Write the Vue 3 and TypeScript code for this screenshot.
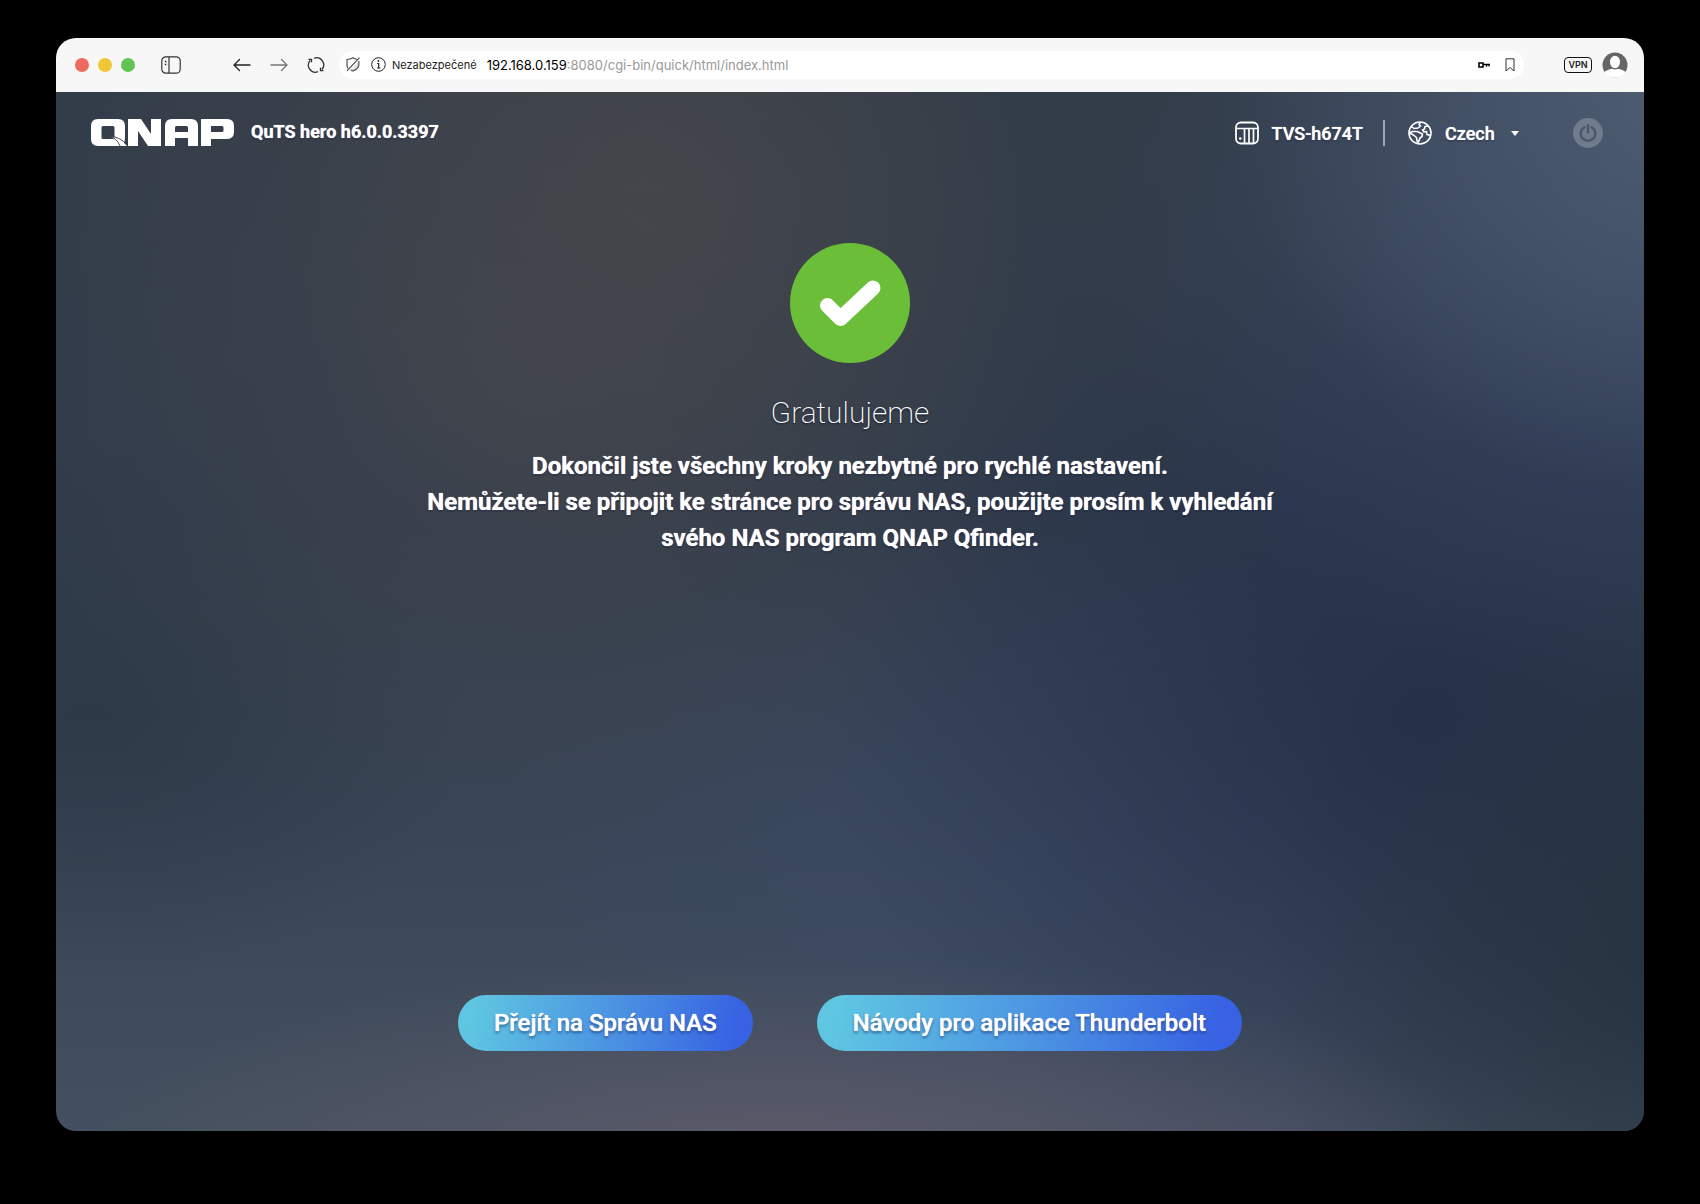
<script setup lang="ts">
import { ref } from 'vue'

const language = ref('Czech')
const lights: string[] = ['red', 'yellow', 'green']
const message: string[] = [
  'Dokončil jste všechny kroky nezbytné pro rychlé nastavení.',
  'Nemůžete-li se připojit ke stránce pro správu NAS, použijte prosím k vyhledání svého NAS program QNAP Qfinder.',
]
const actions: string[] = ['Přejít na Správu NAS', 'Návody pro aplikace Thunderbolt']
</script>

<template>
  <div class="window">
    <div class="toolbar">
      <div class="lights">
        <span v-for="c in lights" :key="c" class="light" :class="c"></span>
      </div>
      <button class="sidebar" aria-label="Sidebar">
        <svg width="20" height="18" viewBox="0 0 20 18" fill="none" stroke="#333" stroke-width="1.2">
          <rect x="0.8" y="0.8" width="18.4" height="16.4" rx="4" />
          <path d="M8 1v16" />
          <path d="M3.8 5.5h1.6M3.8 8.5h1.6" stroke-width="1.5" />
        </svg>
      </button>
      <div class="nav">
        <button aria-label="Back">
          <svg width="18" height="14" viewBox="0 0 18 14" fill="none" stroke="#222" stroke-width="1.3" stroke-linecap="round" stroke-linejoin="round">
            <path d="M17 7H1.2M6.5 1.5 1 7l5.5 5.5" />
          </svg>
        </button>
        <button aria-label="Forward">
          <svg width="18" height="14" viewBox="0 0 18 14" fill="none" stroke="#777" stroke-width="1.3" stroke-linecap="round" stroke-linejoin="round">
            <path d="M1 7h15.8M11.5 1.5 17 7l-5.5 5.5" />
          </svg>
        </button>
        <button aria-label="Reload">
          <svg width="18" height="18" viewBox="0 0 18 18" fill="none" stroke="#333" stroke-width="1.3">
            <path d="M7 2.3A7 7 0 0 1 14.8 13.5M11 15.7A7 7 0 0 1 3.2 4.5" />
            <path d="M1.5 3.3h3v3M16.5 14.7h-3v-3" />
          </svg>
        </button>
      </div>
      <div class="address">
        <svg width="14" height="15" viewBox="0 0 14 15" fill="none" stroke="#444" stroke-width="1.1">
          <path d="M12.6 4.5v3c0 3-2.5 5.2-5.6 6.5l-2-1.1z" fill="#ddd" stroke="none" />
          <path d="M2 11.5C1.2 10.3 1 9 1 7.5v-5C3.5 2.5 5 2 7 .8c1.5.9 2.6 1.3 3.8 1.5M12.9 4v3.5c0 3.2-2.6 5.2-5.9 6.5-1-.3-1.7-.7-2.3-1.1M13.5.7 1 13.8" />
        </svg>
        <svg class="info" width="15" height="15" viewBox="0 0 15 15" fill="none" stroke="#222">
          <circle cx="7.5" cy="7.5" r="6.8" />
          <path d="M6.2 6.5h1.5v4.3M6 11h3.4" stroke-width="1.2" />
          <circle cx="7.4" cy="4" r="0.9" fill="#222" stroke="none" />
        </svg>
        <span class="insecure">Nezabezpečené</span>
        <span class="url">192.168.0.159<span class="path">:8080/cgi-bin/quick/html/index.html</span></span>
        <svg class="key" width="12" height="8" viewBox="0 0 12 8" fill="none" stroke="#000">
          <path d="M1 2h4v4H1z" stroke-width="1.6" />
          <path d="M5 3.5h7M8.5 3.5v2.3M11 3.5v2" stroke-width="1.3" />
        </svg>
        <svg width="10" height="14" viewBox="0 0 10 14" fill="none" stroke="#333">
          <path d="M1 .8h8V13L5 9.5 1 13z" />
        </svg>
      </div>
      <button class="vpn">VPN</button>
      <button aria-label="Profile">
        <svg width="26" height="26" viewBox="0 0 26 26">
          <circle cx="13" cy="13" r="12.5" fill="#666" />
          <ellipse cx="13" cy="10" rx="5" ry="6.2" fill="#fff" />
          <path d="M2.5 20c2-1.8 4.5-2.6 7.5-3.2 2 1 4 1 6 0 3 .6 5.5 1.4 7.5 3.2-2 3.6-6 5.7-10.5 5.7S4.5 23.6 2.5 20z" fill="#fff" />
        </svg>
      </button>
    </div>

    <main class="page">
      <header class="head">
        <svg role="img" aria-label="QNAP" width="144" height="28" viewBox="0 0 144 28">
          <g fill="#fff" fill-rule="evenodd">
            <path d="M7 0h20q7 0 7 7v12q0 4-1.5 5.500L35 27H7q-7 0-7-7V7q0-7 7-7zM12 7q-1.500 0-1.500 1.500v10q0 1.500 1.500 1.500h10q1.500 0 1.500-1.500v-10q0-1.500-1.500-1.500z" />
            <path d="M37 27V0h13l10 15V0h10v27H57L47 12v15z" />
            <path d="M74 27V7q0-7 7-7h19q7 0 7 7v20H97v-8H84v8zM84 13h13V8.500q0-1.500-1.500-1.500h-10Q84 7 84 8.500z" />
            <path d="M110 27V0h26q7 0 7 7v6q0 7-7 7h-16v7zM120 13h11q1.500 0 1.500-1.500v-3q0-1.500-1.500-1.500h-11z" />
          </g>
          <path d="M18 17q12 2 18 10h-7Q26 20 18 17z" fill="#fff" />
          <path d="M18 17q8 2 11 10M18 17q12 1 18 9" fill="none" stroke="#343d4a" stroke-width="0.9" />
        </svg>
        <span class="version">QuTS hero h6.0.0.3397</span>
        <div class="device">
          <svg width="24" height="24" viewBox="0 0 24 24" fill="none" stroke="#fff" stroke-width="1.8">
            <rect x="1" y="1.500" width="22" height="21" rx="5" />
            <path d="M1 7.500h22M9.500 7.500V22M14 7.500V22M18.500 7.500V22" stroke-width="1.700" />
            <circle cx="5.300" cy="17.500" r="1.300" fill="#fff" stroke="none" />
          </svg>
          <span>TVS-h674T</span>
        </div>
        <label class="lang">
          <svg width="24" height="24" viewBox="0 0 24 24" fill="none" stroke="#fff" stroke-width="1.6" stroke-linejoin="round">
            <circle cx="12" cy="12" r="11" />
            <path d="M3.500 5.500 6 7.500l4-.500 2.500-2L11 3.500 12.500 1.500" />
            <path d="M1.500 12 4.500 10.500l4.500 0 5.500 2.500-.500 2.500-2 1.500-1.500 4-1.500-1-.500-3.500L5.500 14z" />
            <path d="M20 5 17 5.500 16.500 8 14.500 9l1.500 2 2.500-.500.500 3 2 .500 1.500 1" />
          </svg>
          <select v-model="language" aria-label="Language">
            <option>Czech</option>
            <option>English</option>
          </select>
          <span class="caret"></span>
        </label>
        <button class="power" aria-label="Power">
          <svg width="18" height="18" viewBox="0 0 18 18" fill="none" stroke="#4a586c" stroke-width="2.4" stroke-linecap="round">
            <path d="M5.300 3.200a7.300 7.300 0 1 0 7.400 0M9 1.500v7" />
          </svg>
        </button>
      </header>

      <section class="result">
        <svg width="120" height="120" viewBox="0 0 120 120">
          <circle cx="60" cy="60" r="60" fill="#6bbf38" />
          <path d="M37.5 62.500 50.5 75.500 83 45" fill="none" stroke="#fff" stroke-width="15" stroke-linecap="round" stroke-linejoin="round" />
        </svg>
        <h1>Gratulujeme</h1>
        <p v-for="line in message" :key="line">{{ line }}</p>
      </section>

      <footer class="actions">
        <button v-for="a in actions" :key="a">{{ a }}</button>
      </footer>
    </main>
  </div>
</template>

<style>
body {
  background: #000;
}
</style>

<style scoped>
.window {
  box-sizing: border-box;
  display: flex;
  flex-direction: column;
  min-height: calc(100vh - 111px);
  margin: 38px 56px 73px;
  border-radius: 20px;
  overflow: hidden;
  color: #fff;
  font-family: Roboto, 'Liberation Sans', sans-serif;
}
button {
  font: inherit;
  color: inherit;
  border: 0;
  padding: 0;
  background: none;
  cursor: pointer;
}
svg {
  display: block;
  flex: none;
}
.toolbar {
  display: flex;
  align-items: center;
  height: 54px;
  box-sizing: border-box;
  padding: 0 16px 1px 19px;
  background: #f7f7f7;
  color: #222;
  font-family: Inter, sans-serif;
}
.lights {
  display: flex;
  gap: 9px;
}
.light {
  width: 14px;
  height: 14px;
  border-radius: 50%;
}
.red { background: #ec6a5f; }
.yellow { background: #f2c735; }
.green { background: #62c455; }
.sidebar {
  margin-left: 26px;
}
.nav {
  display: flex;
  align-items: center;
  gap: 19px;
  margin: 0 14px 0 52px;
}
.address {
  flex: 1;
  min-width: 0;
  display: flex;
  align-items: center;
  box-sizing: border-box;
  height: 28px;
  padding: 0 9px 0 7px;
  border-radius: 14px;
  background: #fff;
}
.info {
  margin: 0 6px 0 11px;
}
.insecure {
  font-size: 11px;
}
.url {
  flex: 1;
  margin-left: 10px;
  font-size: 13px;
  color: #000;
}
.path {
  color: #999;
}
.key {
  margin-right: 15px;
}
.vpn {
  width: 28px;
  height: 16px;
  box-sizing: border-box;
  margin: 0 10px 0 40px;
  border: 1px solid #111;
  border-radius: 4px;
  font-size: 9px;
  line-height: 14px;
  font-weight: 600;
}
.page {
  flex: 1;
  display: flex;
  flex-direction: column;
  background:
    radial-gradient(ellipse 44% 20% at 46% 103%, rgba(96, 92, 108, 0.85), rgba(82, 88, 102, 0) 100%),
    radial-gradient(ellipse 30% 38% at 103% 0%, #4f5d72, rgba(66, 84, 112, 0) 100%),
    radial-gradient(ellipse 32% 44% at 98% 14%, rgba(58, 74, 106, 0.7), rgba(48, 64, 96, 0) 100%),
    radial-gradient(ellipse 24% 36% at 38% 10%, rgba(72, 72, 74, 0.65), rgba(62, 68, 76, 0) 100%),
    radial-gradient(ellipse 34% 50% at 30% 26%, rgba(70, 72, 78, 0.7), rgba(62, 68, 78, 0) 100%),
    radial-gradient(ellipse 24% 26% at 2% 60%, rgba(42, 54, 66, 0.7), rgba(44, 56, 70, 0) 100%),
    radial-gradient(ellipse 28% 44% at 104% 82%, rgba(36, 49, 61, 1), rgba(38, 51, 68, 0) 100%),
    radial-gradient(ellipse 38% 46% at 86% 60%, rgba(37, 48, 74, 0.95), rgba(40, 52, 78, 0) 100%),
    radial-gradient(ellipse 36% 34% at 62% 76%, rgba(60, 74, 102, 0.7), rgba(60, 74, 98, 0) 100%),
    linear-gradient(180deg, #333d49 0%, #303b4b 40%, #384556 70%, #44505f 100%);
}
.head {
  display: flex;
  align-items: center;
  height: 82px;
  padding: 0 41px 0 35px;
  font-size: 18px;
  font-weight: 500;
  text-shadow: 0 0 1px #fff, 0 1px 2px rgba(10, 16, 40, 0.7);
}
.version {
  margin-left: 16px;
  padding-bottom: 4px;
  font-weight: 700;
}
.device {
  display: flex;
  align-items: center;
  gap: 13px;
  margin-left: auto;
}
.lang {
  position: relative;
  display: flex;
  align-items: center;
  margin-left: 20px;
  padding-left: 23px;
  border-left: 2px solid rgba(255, 255, 255, 0.5);
}
.lang select {
  appearance: none;
  width: 74px;
  height: 26px;
  margin-left: 13px;
  padding: 0;
  border: 0;
  background: none;
  color: inherit;
  font: inherit;
  text-shadow: inherit;
}
.caret {
  position: absolute;
  right: 0;
  border: 4px solid transparent;
  border-top: 5px solid #fff;
  border-bottom: 0;
  pointer-events: none;
}
.power {
  display: flex;
  align-items: center;
  justify-content: center;
  width: 30px;
  height: 30px;
  margin-left: 54px;
  border-radius: 50%;
  background: #707c8c;
}
.result {
  flex: 1;
  align-self: center;
  display: flex;
  flex-direction: column;
  align-items: center;
  width: 100%;
  max-width: 880px;
  padding-top: 69px;
  text-align: center;
  text-shadow: 0 0 1px #fff, 0 1px 2px rgba(10, 16, 40, 0.8);
}
h1 {
  margin: 28px 0 13px;
  font-size: 30px;
  line-height: 44px;
  font-weight: 200;
  text-shadow: 0 1px 2px rgba(10, 16, 40, 0.8);
}
p {
  margin: 0;
  font-size: 24px;
  line-height: 36px;
  font-weight: 700;
}
.actions {
  display: flex;
  justify-content: center;
  gap: 64px;
  padding-bottom: 80px;
}
.actions button {
  height: 56px;
  padding: 0 36px;
  border-radius: 28px;
  background: linear-gradient(100deg, #5fc6e2 5%, #4a90e2 55%, #3762e3 94%);
  font-size: 24px;
  font-weight: 500;
  text-shadow: 0 0 1px #fff, 0 2px 3px rgba(10, 30, 90, 0.6);
}
</style>
